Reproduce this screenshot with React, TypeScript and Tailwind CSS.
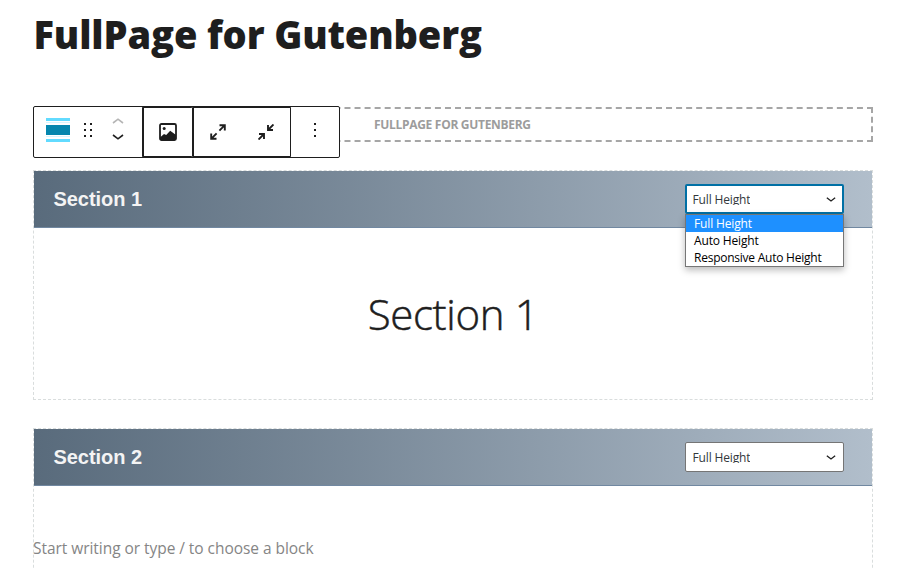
import React from "react";

const ui = "font-['Open_Sans','Noto_Sans',sans-serif]";

function Chevron({ up = false, size = "h-[6px] w-[12px]", className = "" }: { up?: boolean; size?: string; className?: string }) {
  return (
    <svg viewBox="0 0 12 6" className={`${size} ${className}`} fill="none" stroke="currentColor" strokeWidth="1.6">
      <path d={up ? "M1 5 6 1.2 11 5" : "M1 1 6 4.8 11 1"} />
    </svg>
  );
}

function Toolbar() {
  return (
    <div className="absolute left-[-2px] top-[-3px] z-10 flex h-[52px] w-[307px] rounded-[2px] border border-[#1e1e1e] bg-white text-[#1e1e1e]">
      <div className="flex w-[108px] items-center">
        <svg viewBox="0 0 24 24" className="mb-[4px] ml-[12px] h-6 w-6" shapeRendering="crispEdges">
          <path fill="#62dbff" d="M0 0h24v3H0zM0 21h24v3H0z" />
          <path fill="#d8f6ff" d="M0 4h24v1H0zM0 18h24v1H0z" />
          <path fill="#0586ae" d="M0 7h24v10H0z" />
        </svg>
        <svg viewBox="0 0 8 14" className="mb-[4px] ml-[14px] h-[14px] w-[8px]" shapeRendering="crispEdges" fill="currentColor">
          <path d="M0 0h2v2H0zM6 0h2v2H6zM0 6h2v2H0zM6 6h2v2H6zM0 12h2v2H0zM6 12h2v2H6z" />
        </svg>
        <div className="mb-[6px] ml-[20px] flex flex-col gap-[10px]">
          <Chevron up className="text-[#b5b5b5]" />
          <Chevron />
        </div>
      </div>
      <div className="-my-px flex w-[50px] items-center justify-center rounded-[2px] border-2 border-r-0 border-[#1e1e1e]">
        <svg viewBox="0 0 18 18" className="h-[18px] w-[18px]" fill="none">
          <rect x="1" y="1" width="16" height="16" rx="1.5" stroke="currentColor" strokeWidth="1.8" />
          <circle cx="5.2" cy="5.6" r="1.5" fill="currentColor" />
          <path fill="currentColor" d="M1 14.5 5 10.9l2.2 1.2L11.2 7.8 17 12V17H1z" />
        </svg>
      </div>
      <div className="-my-px flex w-[99px] items-center rounded-[2px] border-2 border-r-[1px] border-[#1e1e1e]">
        <svg viewBox="0 0 16 16" className="ml-[16px] h-4 w-4" fill="none" stroke="currentColor" strokeWidth="1.9">
          <path d="M9.5 1.2h5.3v5.3M14.8 1.2 9.4 6.6M1.2 9.5v5.3h5.3M1.2 14.8l5.4-5.4" />
        </svg>
        <svg viewBox="0 0 16 16" className="ml-[32px] h-4 w-4" fill="none" stroke="currentColor" strokeWidth="1.9">
          <path d="M15.5.5 10 6M10 1v5h5M.5 15.5 6 10M6 15v-5H1" />
        </svg>
      </div>
      <div className="flex flex-1 items-center justify-center">
        <svg viewBox="0 0 2 14" className="mb-[4px] h-[14px] w-[2px]" shapeRendering="crispEdges" fill="currentColor">
          <path d="M0 0h2v2H0zM0 6h2v2H0zM0 12h2v2H0z" />
        </svg>
      </div>
    </div>
  );
}

function HeightSelect({ open = false }: { open?: boolean }) {
  return (
    <div className={`relative h-[30px] w-[159px] rounded-[2px] bg-white text-[12px] ${ui} ${open ? "border-2 border-[#0070a5] px-[6px]" : "border border-[#757575] px-[7px]"}`}>
      <div className="flex h-full items-center justify-between text-[#32373c]">
        <span className="-ml-[0.5px] mb-[2px] h-[13px] overflow-hidden leading-[15px] tracking-[-0.15px]">Full Height</span>
        <Chevron size="h-[5px] w-[10px]" className="mt-[1px] text-[#1e1e1e]" />
      </div>
      {open && (
        <div className="absolute left-[-2px] top-[28px] z-20 w-[159px] border border-[#767676] bg-white leading-[17px] tracking-[-0.24px] text-black shadow-[0_3px_7px_rgba(0,0,0,0.28)]">
          <div className="bg-[#1e90ff] pl-[8px] tracking-[-0.15px] text-white">Full Height</div>
          <div className="pl-[8px] tracking-[-0.15px]">Auto Height</div>
          <div className="whitespace-nowrap pl-[8px]">Responsive Auto Height</div>
        </div>
      )}
    </div>
  );
}

function SectionHeader({ title, open }: { title: string; open?: boolean }) {
  return (
    <header className="flex h-[57px] items-center justify-between border-b border-[#7188a1] bg-linear-to-r from-[#596b7c] to-[#b1becb] pl-[19.5px] pr-[28px]">
      <h2 className="font-['Liberation_Sans',sans-serif] text-[20px] font-bold leading-[24px] tracking-[-0.05px] text-[#f4f4f4]">{title}</h2>
      <HeightSelect open={open} />
    </header>
  );
}

export default function App() {
  return (
    <main className={`h-[568px] w-[900px] overflow-hidden bg-white pl-[33px] text-[#1e1e1e] ${ui}`}>
      <h1 className="h-[107px] whitespace-nowrap pl-[0.5px] pt-[7px] text-[38px] font-extrabold leading-[54px] tracking-[-0.12px]">FullPage for Gutenberg</h1>
      <div className="relative h-[35px] w-[840px] border-2 border-dashed border-[#a6a6a6]">
        <Toolbar />
        <div className="pl-[339px] text-[12px] font-bold leading-[31px] tracking-[-0.3px] text-[#9c9c9c]">FULLPAGE FOR GUTENBERG</div>
      </div>
      <section className="mt-[28px] h-[230px] w-[840px] border border-dashed border-[#d9dddd]">
        <SectionHeader title="Section 1" open />
        <p className="pt-[57px] text-center text-[42px] font-light leading-[58px] tracking-[-0.35px] [-webkit-text-stroke:0.5px_#1e1e1e]">Section 1</p>
      </section>
      <section className="mt-[28px] h-[160px] w-[840px] border border-dashed border-[#d9dddd]">
        <SectionHeader title="Section 2" />
        <p className="ml-[-1px] pt-[50px] text-[15.5px] leading-[24px] tracking-[-0.05px] text-[#858585]">Start writing or type / to choose a block</p>
      </section>
    </main>
  );
}
